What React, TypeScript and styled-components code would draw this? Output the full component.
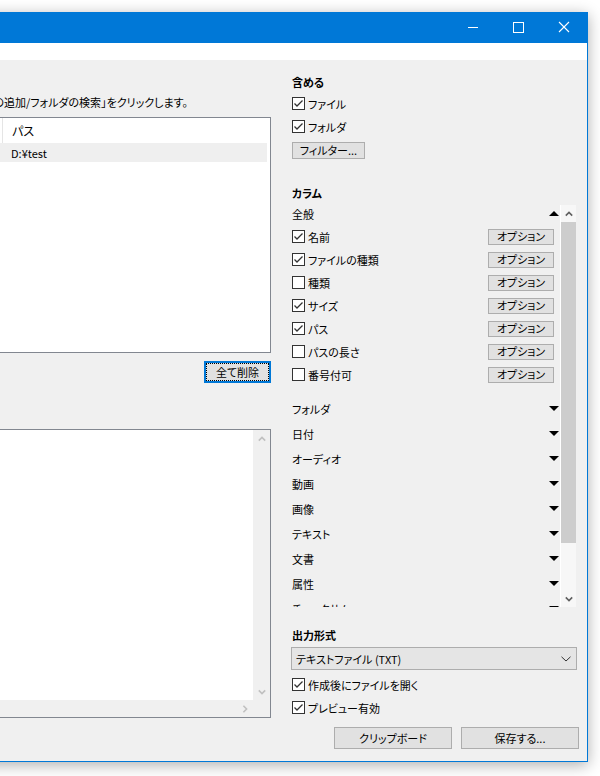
import React from "react";
import styled, { createGlobalStyle } from "styled-components";

const Global = createGlobalStyle`
  html, body { margin: 0; padding: 0; background: #ffffff; overflow: hidden; }
  body { width: 600px; height: 776px; }
`;

const Window = styled.div`
  box-sizing: border-box;
  width: 888px;
  margin: 12px 0 0 -300px;
  border: 1px solid #0078d7;
  background: #f0f0f0;
  box-shadow: 0 3px 14px rgba(0, 0, 0, 0.32);
  font-family: "Noto Sans CJK JP", "Noto Sans", sans-serif;
  font-size: 11px;
  color: #000;
  font-feature-settings: "palt";
`;

const TitleBar = styled.div`
  height: 30px;
  background: #0078d7;
  display: flex;
  justify-content: flex-end;
`;

const CaptionButton = styled.div`
  width: 46px;
  height: 30px;
  display: block;
  svg { display: block; }
`;

const MenuStrip = styled.div`
  height: 17px;
  background: #ffffff;
`;

const Body = styled.div`
  box-sizing: border-box;
  height: 701px;
  display: flex;
  gap: 19px;
  padding-right: 8px;
`;

const LeftCol = styled.div`
  flex: 1;
  min-width: 0;
  display: flex;
  flex-direction: column;
  padding-top: 34px;
`;

const Hint = styled.div`
  display: flex;
  justify-content: flex-end;
  padding-right: 83px;
  white-space: nowrap;
  height: 16px;
  line-height: 16px;
`;

const ListBox = styled.div<{ $top: number; $h: number }>`
  box-sizing: border-box;
  margin-top: ${(p) => p.$top}px;
  height: ${(p) => p.$h}px;
  border: 1px solid #828790;
  background: #ffffff;
`;

const HeaderRow = styled.div`
  height: 25px;
  display: flex;
  margin-right: 3px;
  align-items: center;
  white-space: nowrap;
  font-size: 12px;
`;

const DataRow = styled.div`
  height: 19px;
  display: flex;
  align-items: center;
  background: #efefef;
  margin-right: 3px;
  white-space: nowrap;
`;

const Cell = styled.div<{ $w?: number; $pad: number; $sep?: boolean }>`
  ${(p) => (p.$w ? `flex: 0 0 ${p.$w}px;` : "flex: 1;")}
  box-sizing: border-box;
  padding-left: ${(p) => p.$pad}px;
  height: 100%;
  display: flex;
  align-items: center;
  ${(p) => (p.$sep ? "border-right: 1px solid #e5e5e5;" : "")}
`;

const DeleteRow = styled.div`
  display: flex;
  justify-content: flex-end;
  margin-top: 8px;
`;

const WinButton = styled.button<{ $w: number; $h: number; $focus?: boolean }>`
  box-sizing: border-box;
  width: ${(p) => p.$w}px;
  height: ${(p) => p.$h}px;
  padding: 0;
  background: #e1e1e1;
  border: ${(p) => (p.$focus ? "2px solid #0078d7" : "1px solid #adadad")};
  ${(p) => (p.$focus ? "outline: 1px dotted #000; outline-offset: -3px;" : "")}
  font-family: inherit;
  font-size: 11px;
  font-feature-settings: "palt";
  color: #000;
  line-height: 1;
  display: flex;
  align-items: center;
  justify-content: center;
  flex-shrink: 0;
`;

const ScrollGrid = styled.div`
  height: 100%;
  display: grid;
  grid-template-columns: 1fr 17px;
  grid-template-rows: 1fr 17px;
`;

const WhiteArea = styled.div`
  background: #ffffff;
`;

const VScroll = styled.div<{ $bg: string }>`
  background: ${(p) => p.$bg};
  display: flex;
  flex-direction: column;
  justify-content: space-between;
  align-items: center;
`;

const HScroll = styled.div`
  background: #f0f0f0;
  display: flex;
  justify-content: flex-end;
  align-items: center;
`;

const Corner = styled.div`
  background: #f0f0f0;
`;

const ArrowBox = styled.div<{ $w: number; $h: number }>`
  width: ${(p) => p.$w}px;
  height: ${(p) => p.$h}px;
  display: flex;
  align-items: center;
  justify-content: center;
  flex-shrink: 0;
  svg { display: block; }
`;

const RightCol = styled.div`
  flex: 0 0 289px;
  display: flex;
  flex-direction: column;
  padding-top: 14px;
  box-sizing: border-box;
`;

const SectionLabel = styled.div<{ $top?: number }>`
  margin-top: ${(p) => p.$top ?? 0}px;
  padding-left: 2px;
  font-weight: bold;
  height: 16px;
  line-height: 16px;
`;

const CheckRow = styled.label<{ $top?: number }>`
  margin-top: ${(p) => p.$top ?? 0}px;
  height: 23px;
  display: flex;
  align-items: center;
  gap: 3px;
  padding-left: 2px;
  white-space: nowrap;
`;

const Box = styled.span`
  box-sizing: border-box;
  width: 13px;
  height: 13px;
  border: 1px solid #333333;
  background: #ffffff;
  flex-shrink: 0;
  display: flex;
  align-items: center;
  justify-content: center;
  svg { display: block; }
`;

const FilterWrap = styled.div`
  margin-top: 4px;
  padding-left: 2px;
  display: flex;
`;

const ColumnList = styled.div`
  margin-top: 4px;
  margin-right: 3px;
  height: 402px;
  display: flex;
`;

const ColumnContent = styled.div`
  flex: 1;
  min-width: 0;
  overflow: hidden;
  display: flex;
  flex-direction: column;
`;

const GroupHeader = styled.div`
  flex-shrink: 0;
  height: 17px;
  padding: 0 1px 3px 2px;
  display: flex;
  align-items: center;
  justify-content: space-between;
`;

const ItemRow = styled.div`
  flex-shrink: 0;
  height: 23px;
  display: flex;
  align-items: center;
  gap: 3px;
  padding: 0 6px 0 2px;
  white-space: nowrap;
`;

const Grow = styled.span`
  flex: 1;
`;

const GroupGap = styled.div`
  flex-shrink: 0;
  height: 10px;
`;

const GroupRow = styled.div`
  flex-shrink: 0;
  height: 25px;
  display: flex;
  align-items: center;
  justify-content: space-between;
  padding: 0 1px 0 2px;
  white-space: nowrap;
`;

const Track = styled.div`
  flex: 0 0 16px;
  box-sizing: border-box;
  border-left: 1px solid #ffffff;
  background: #f7f7f7;
  display: flex;
  flex-direction: column;
`;

const Thumb = styled.div`
  height: 321px;
  background: #cdcdcd;
`;

const TrackFill = styled.div`
  flex: 1;
`;

const Combo = styled.div`
  box-sizing: border-box;
  margin: 4px 2px 0 1px;
  height: 23px;
  border: 1px solid #adadad;
  background: #e5e5e5;
  display: flex;
  align-items: center;
  justify-content: space-between;
  padding: 0 5px 0 4px;
  white-space: nowrap;
  svg { display: block; }
`;

const ButtonRow = styled.div`
  margin-top: 8px;
  display: flex;
  justify-content: flex-end;
  gap: 9px;
`;

const CheckMark = () => (
  <svg width="11" height="11" viewBox="0 0 11 11">
    <polyline points="1.5,5.5 4,8 9.5,2.5" fill="none" stroke="#333" strokeWidth="1.3" />
  </svg>
);

const Check: React.FC<{ on?: boolean }> = ({ on }) => <Box>{on ? <CheckMark /> : null}</Box>;

const Tri: React.FC<{ up?: boolean }> = ({ up }) => (
  <svg width="10" height="5" viewBox="0 0 10 5" style={{ display: "block" }}>
    {up ? <polygon points="0,5 10,5 5,0" fill="#000" /> : <polygon points="0,0 10,0 5,5" fill="#000" />}
  </svg>
);

const Chevron: React.FC<{ dir: "up" | "down" | "right"; color: string }> = ({ dir, color }) => {
  const pts =
    dir === "up" ? "0.8,4.6 4,1.4 7.2,4.6" : dir === "down" ? "0.8,1.4 4,4.6 7.2,1.4" : "1.4,0.8 4.6,4 1.4,7.2";
  const w = dir === "right" ? 6 : 8;
  const h = dir === "right" ? 8 : 6;
  const vb = dir === "right" ? "0 0 6 8" : "0 0 8 6";
  return (
    <svg width={w} height={h} viewBox={vb}>
      <polyline points={pts} fill="none" stroke={color} strokeWidth="1.6" />
    </svg>
  );
};

const columns: { label: string; on: boolean }[] = [
  { label: "名前", on: true },
  { label: "ファイルの種類", on: true },
  { label: "種類", on: false },
  { label: "サイズ", on: true },
  { label: "パス", on: true },
  { label: "パスの長さ", on: false },
  { label: "番号付可", on: false },
];

const groups = ["フォルダ", "日付", "オーディオ", "動画", "画像", "テキスト", "文書", "属性", "チェックサム"];

export default function App() {
  return (
    <>
      <Global />
      <Window>
        <TitleBar>
          <CaptionButton>
            <svg width="46" height="30">
              <line x1="19" y1="14.5" x2="29" y2="14.5" stroke="#fff" strokeWidth="1" />
            </svg>
          </CaptionButton>
          <CaptionButton>
            <svg width="46" height="30">
              <rect x="18.5" y="9.5" width="10" height="10" fill="none" stroke="#fff" strokeWidth="1" />
            </svg>
          </CaptionButton>
          <CaptionButton>
            <svg width="46" height="30">
              <line x1="18" y1="9" x2="28" y2="19" stroke="#fff" strokeWidth="1.1" />
              <line x1="28" y1="9" x2="18" y2="19" stroke="#fff" strokeWidth="1.1" />
            </svg>
          </CaptionButton>
        </TitleBar>
        <MenuStrip />
        <Body>
          <LeftCol>
            <Hint>処理するファイルを追加するには、「ファイルの追加/フォルダの検索」をクリックします。</Hint>
            <ListBox $top={7} $h={236}>
              <HeaderRow>
                <Cell $w={301} $pad={8} $sep>
                  名前
                </Cell>
                <Cell $pad={9}>パス</Cell>
              </HeaderRow>
              <DataRow>
                <Cell $w={301} $pad={8}>
                  test
                </Cell>
                <Cell $pad={8}>D:¥test</Cell>
              </DataRow>
            </ListBox>
            <DeleteRow>
              <WinButton $w={67} $h={22} $focus>
                全て削除
              </WinButton>
            </DeleteRow>
            <ListBox $top={46} $h={289}>
              <ScrollGrid>
                <WhiteArea />
                <VScroll $bg="#f0f0f0">
                  <ArrowBox $w={17} $h={17}>
                    <Chevron dir="up" color="#c0c0c0" />
                  </ArrowBox>
                  <ArrowBox $w={17} $h={17}>
                    <Chevron dir="down" color="#c0c0c0" />
                  </ArrowBox>
                </VScroll>
                <HScroll>
                  <ArrowBox $w={17} $h={17}>
                    <Chevron dir="right" color="#c0c0c0" />
                  </ArrowBox>
                </HScroll>
                <Corner />
              </ScrollGrid>
            </ListBox>
          </LeftCol>
          <RightCol>
            <SectionLabel>含める</SectionLabel>
            <CheckRow $top={2}>
              <Check on />
              ファイル
            </CheckRow>
            <CheckRow>
              <Check on />
              フォルダ
            </CheckRow>
            <FilterWrap>
              <WinButton $w={73} $h={17}>
                フィルター...
              </WinButton>
            </FilterWrap>
            <SectionLabel $top={26}>カラム</SectionLabel>
            <ColumnList>
              <ColumnContent>
                <GroupHeader>
                  <span>全般</span>
                  <Tri up />
                </GroupHeader>
                {columns.map((c) => (
                  <ItemRow key={c.label}>
                    <Check on={c.on} />
                    <span>{c.label}</span>
                    <Grow />
                    <WinButton $w={66} $h={16}>
                      オプション
                    </WinButton>
                  </ItemRow>
                ))}
                <GroupGap />
                {groups.map((g) => (
                  <GroupRow key={g}>
                    <span>{g}</span>
                    <Tri />
                  </GroupRow>
                ))}
              </ColumnContent>
              <Track>
                <ArrowBox $w={15} $h={17}>
                  <Chevron dir="up" color="#606060" />
                </ArrowBox>
                <Thumb />
                <TrackFill />
                <ArrowBox $w={15} $h={17}>
                  <Chevron dir="down" color="#606060" />
                </ArrowBox>
              </Track>
            </ColumnList>
            <SectionLabel $top={20}>出力形式</SectionLabel>
            <Combo>
              <span>テキストファイル (TXT)</span>
              <svg width="10" height="6" viewBox="0 0 10 6">
                <polyline points="0.5,0.8 5,5 9.5,0.8" fill="none" stroke="#333" strokeWidth="1" />
              </svg>
            </Combo>
            <CheckRow $top={3}>
              <Check on />
              作成後にファイルを開く
            </CheckRow>
            <CheckRow>
              <Check on />
              プレビュー有効
            </CheckRow>
            <ButtonRow>
              <WinButton $w={118} $h={22}>
                クリップボード
              </WinButton>
              <WinButton $w={118} $h={22}>
                保存する...
              </WinButton>
            </ButtonRow>
          </RightCol>
        </Body>
      </Window>
    </>
  );
}
